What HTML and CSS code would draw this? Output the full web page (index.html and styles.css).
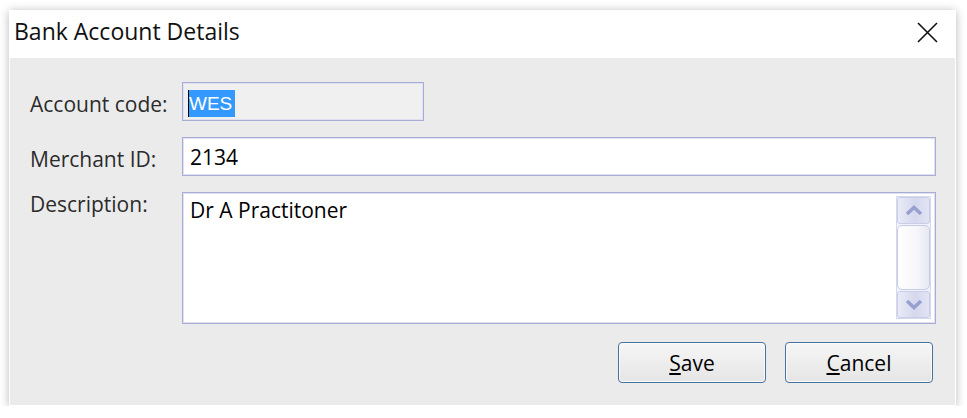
FILE: index.html
```html
<!DOCTYPE html>
<html lang="en">
<head>
    <meta charset="UTF-8">
    <meta name="viewport" content="width=device-width, initial-scale=1.0">
    <title>Bank Account Details</title>
    <link rel="stylesheet" href="styles.css">
</head>
<body>
    <div class="dialog">
        <div class="titlebar">
            <span class="title">Bank Account Details</span>
            <button class="close" type="button" aria-label="Close">
                <svg width="21" height="21" viewBox="0 0 21 21">
                    <path d="M1 1 L20 20 M20 1 L1 20" stroke="#111" stroke-width="1.6" fill="none"/>
                </svg>
            </button>
        </div>
        <div class="content">
            <div class="fields">
                <label class="label">Account code:</label>
                <div class="field code"><span class="sel">WES</span></div>

                <label class="label">Merchant ID:</label>
                <div class="field">2134</div>

                <label class="label top">Description:</label>
                <div class="field memo">
                    <div class="memo-text">Dr A Practitoner</div>
                    <div class="scrollbar">
                        <div class="sb-btn">
                            <svg width="18" height="11" viewBox="0 0 18 11"><path d="M2 9 L9 2.5 L16 9" stroke="#98a0d0" stroke-width="3.5" fill="none"/></svg>
                        </div>
                        <div class="sb-thumb"></div>
                        <div class="sb-btn">
                            <svg width="18" height="11" viewBox="0 0 18 11"><path d="M2 2 L9 8.5 L16 2" stroke="#98a0d0" stroke-width="3.5" fill="none"/></svg>
                        </div>
                    </div>
                </div>
            </div>
            <div class="actions">
                <button type="button" class="btn"><u>S</u>ave</button>
                <button type="button" class="btn"><u>C</u>ancel</button>
            </div>
        </div>
    </div>
</body>
</html>
```

FILE: styles.css
```css
body {
    margin: 0;
    padding: 10px 0 0 9px;
    background: #fff;
    font-family: "Open Sans", "Noto Sans", sans-serif;
}
.dialog {
    width: 947px;
    height: 396px;
    background: #fff;
    box-shadow: 0 1px 9px rgba(0, 0, 0, 0.28);
    display: flex;
    flex-direction: column;
}
.titlebar {
    height: 48px;
    display: flex;
    justify-content: space-between;
    padding-left: 5px;
}
.title {
    font-size: 23px;
    line-height: 43px;
    color: #111;
}
.close {
    border: none;
    background: none;
    padding: 0;
    margin: 12px 18px 0 0;
    width: 21px;
    height: 21px;
}
.content {
    flex: 1;
    margin: 0 1px 1px 1px;
    background: #ebebeb;
    padding: 24px 19px 0 20px;
}
.fields {
    display: grid;
    grid-template-columns: 152px 1fr;
    grid-template-rows: 39px 39px 132px;
    row-gap: 16px;
}
.label {
    font-size: 21px;
    line-height: 28px;
    color: #2b2b2b;
    padding-top: 8px;
}
.label.top {
    padding-top: 0;
    margin-top: -2px;
}
.field {
    border: 1px solid #a7add5;
    box-shadow: inset 0 0 0 1px #dfe1f0;
    background: #fff;
    font-size: 21px;
    line-height: 28px;
    color: #000;
    padding: 5px 7px 0;
}
.field.code {
    width: 242px;
    box-sizing: border-box;
    background: #f0f0f0;
    padding: 5px 0 0 5px;
}
.sel {
    display: inline-block;
    font-family: "Liberation Sans", Arial, sans-serif;
    font-size: 19px;
    line-height: 27px;
    background: #3399ff;
    color: #fff;
    padding-right: 3px;
    border-left: 1px solid #000;
}
.field.memo {
    display: flex;
    padding: 3px 4px 4px 7px;
}
.memo-text {
    flex: 1;
}
.scrollbar {
    width: 33px;
    display: flex;
    flex-direction: column;
    border: 1px solid #d6d9ee;
    background: #f2f3fa;
}
.sb-btn {
    height: 25px;
    display: flex;
    align-items: center;
    justify-content: center;
    background: linear-gradient(to right, #e9ebf7, #d5d8ee 55%, #e2e4f4);
    border: 1px solid #c9cde8;
    border-radius: 3px;
}
.sb-thumb {
    flex: 1;
    margin: 1px 0;
    border: 1px solid #c7cbe6;
    border-radius: 5px;
    background: linear-gradient(to right, #ffffff, #f6f6fb 60%, #e6e8f3);
}
.actions {
    display: flex;
    justify-content: flex-end;
    gap: 19px;
    margin: 18px 3px 0 0;
}
.btn {
    width: 148px;
    height: 41px;
    border: 1px solid #46709e;
    border-radius: 4px;
    box-shadow: inset 0 0 0 1px #fbfbfb;
    background: linear-gradient(#f6f6f6, #e5e5e5);
    font-family: "Open Sans", "Noto Sans", sans-serif;
    font-size: 21px;
    line-height: 37px;
    color: #000;
    padding: 2px 0 0;
}
```
